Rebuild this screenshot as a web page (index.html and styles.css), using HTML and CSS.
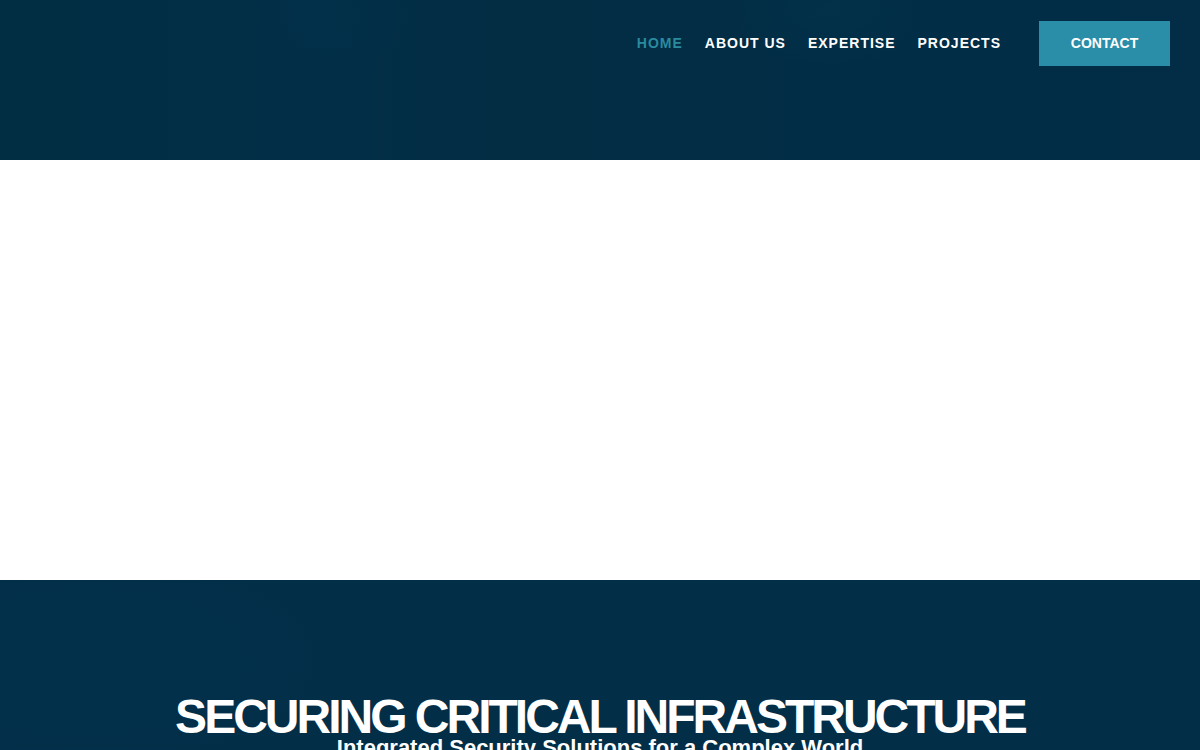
FILE: index.html
```html
<!DOCTYPE html>
<html lang="en">
<head>
    <meta charset="UTF-8">
    <meta name="viewport" content="width=device-width, initial-scale=1.0">
    <title>Securing Critical Infrastructure</title>
    <link rel="stylesheet" href="styles.css">
</head>
<body>
    <header class="site-header">
        <nav class="main-nav">
            <a href="#" class="nav-link active">HOME</a>
            <a href="#" class="nav-link">ABOUT US</a>
            <a href="#" class="nav-link">EXPERTISE</a>
            <a href="#" class="nav-link">PROJECTS</a>
        </nav>
        <a href="#" class="btn-contact">CONTACT</a>
    </header>

    <div class="blank-area"></div>

    <section class="hero">
        <h1 class="hero-title">SECURING CRITICAL INFRASTRUCTURE</h1>
        <p class="hero-subtitle">Integrated Security Solutions for a Complex World</p>
    </section>
</body>
</html>
```

FILE: styles.css
```css
* {
    margin: 0;
    padding: 0;
    box-sizing: border-box;
}

html, body {
    height: 750px;
    overflow: hidden;
}

body {
    font-family: "Liberation Sans", Arial, sans-serif;
    background: #ffffff;
    color: #ffffff;
}

.site-header {
    height: 160px;
    display: flex;
    align-items: flex-start;
    justify-content: flex-end;
    padding: 21px 30px 0 0;
    background:
        radial-gradient(ellipse 90px 70px at 330px 15px, rgba(3, 54, 84, 0.22), transparent),
        radial-gradient(ellipse 100px 60px at 830px 10px, rgba(3, 58, 84, 0.3), transparent),
        linear-gradient(90deg, #022e44 0%, #022e47 27%, #022d43 42%, #022d46 70%, #032d47 100%);
}

.main-nav {
    display: flex;
    align-items: center;
    gap: 22px;
    height: 44px;
    margin-right: 38px;
}

.nav-link {
    font-size: 14px;
    font-weight: 700;
    letter-spacing: 1px;
    color: #ffffff;
    text-decoration: none;
}

.nav-link.active {
    color: #2a8a9f;
}

.btn-contact {
    width: 131px;
    height: 45px;
    padding-bottom: 1px;
    display: flex;
    align-items: center;
    justify-content: center;
    background: #2b8ea9;
    font-size: 14px;
    font-weight: 700;
    color: #ffffff;
    text-decoration: none;
}

.blank-area {
    height: 420px;
    background: #ffffff;
}

.hero {
    height: 170px;
    overflow: hidden;
    padding-top: 116px;
    text-align: center;
    background:
        radial-gradient(ellipse 260px 120px at 90px 80px, rgba(4, 56, 84, 0.2), transparent),
        #022e48;
}

.hero-title {
    font-size: 48px;
    line-height: 41px;
    font-weight: 700;
    letter-spacing: -3px;
}

.hero-subtitle {
    font-size: 22px;
    line-height: 22px;
    font-weight: 700;
}
```
